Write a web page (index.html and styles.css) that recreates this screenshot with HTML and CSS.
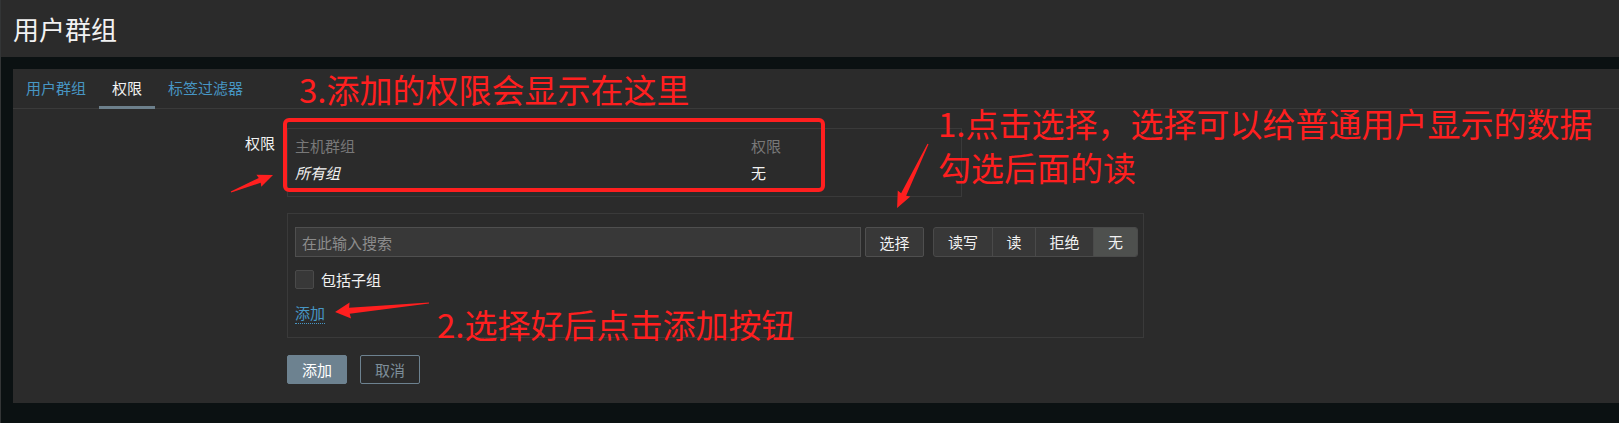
FILE: index.html
```html
<!DOCTYPE html>
<html lang="zh-CN">
<head>
<meta charset="utf-8">
<title>用户群组</title>
<link rel="stylesheet" href="styles.css">
</head>
<body>
<div class="page">
  <header class="topbar"><h1 class="title">用户群组</h1></header>
  <main class="main">
    <section class="panel">
      <ul class="tabs">
        <li class="tab"><a class="tab-link">用户群组</a></li>
        <li class="tab active"><a class="tab-link">权限</a></li>
        <li class="tab"><a class="tab-link">标签过滤器</a></li>
      </ul>
      <div class="form">
        <div class="form-row">
          <div class="form-label">权限</div>
          <div class="form-field">
            <div class="perm-table">
              <div class="perm-row perm-head"><span class="col-group">主机群组</span><span class="col-perm">权限</span></div>
              <div class="perm-row"><span class="col-group italic">所有组</span><span class="col-perm">无</span></div>
            </div>
            <div class="search-box">
              <div class="search-line">
                <input class="search-input" type="text" placeholder="在此输入搜索">
                <button class="btn-select" type="button">选择</button>
                <div class="segmented">
                  <span class="seg seg-rw">读写</span>
                  <span class="seg seg-r">读</span>
                  <span class="seg seg-deny">拒绝</span>
                  <span class="seg seg-none active">无</span>
                </div>
              </div>
              <div class="check-line">
                <span class="checkbox"></span>
                <span class="check-label">包括子组</span>
              </div>
              <div class="link-line"><a class="add-link">添加</a></div>
            </div>
          </div>
        </div>
        <div class="form-actions">
          <button class="btn btn-primary" type="button">添加</button>
          <button class="btn btn-outline" type="button">取消</button>
        </div>
      </div>
    </section>
  </main>

  <div class="annotations">
    <div class="note-box"></div>
    <div class="note note-3">3.添加的权限会显示在这里</div>
    <div class="note note-1">1.点击选择，选择可以给普通用户显示的数据<br>勾选后面的读</div>
    <div class="note note-2">2.选择好后点击添加按钮</div>
    <svg class="arrows" width="1619" height="423" viewBox="0 0 1619 423" xmlns="http://www.w3.org/2000/svg">
      <polygon fill="#ff1f1f" transform="translate(231 192) rotate(-22)" points="0,-0.6 31,-2.6 30,-6.5 45.3,0 30,6.5 31,2.6 0,0.6"/>
      <polygon fill="#ff1f1f" transform="translate(928 144) rotate(115.8)" points="0,-0.6 56,-2.8 55,-7 71,0 55,7 56,2.8 0,0.6"/>
      <polygon fill="#ff1f1f" transform="translate(429 303) rotate(174.5)" points="0,-0.6 80,-3 79,-8 94.4,0 79,8 80,3 0,0.6"/>
    </svg>
  </div>
</div>
</body>
</html>
```

FILE: styles.css
```css
* { box-sizing: border-box; }

html, body {
  margin: 0;
  padding: 0;
  background: #0b1112;
}

body {
  font-family: "Noto Sans CJK SC", "Noto Sans", sans-serif;
  font-size: 15px;
  line-height: 18px;
  color: #f2f2f2;
}

.page {
  position: relative;
  width: 1619px;
  height: 423px;
  overflow: hidden;
  border-left: 1px solid #333536;
}

.topbar {
  height: 57px;
  background: #2b2b2b;
  padding-left: 12px;
}

.title {
  margin: 0;
  font-size: 26px;
  font-weight: normal;
  line-height: 57px;
  color: #f2f2f2;
}

.main {
  padding: 12px 0 0 12px;
}

.panel {
  background: #2b2b2b;
  height: 334px;
}

.tabs {
  list-style: none;
  margin: 0;
  padding: 0;
  display: flex;
  height: 40px;
  border-bottom: 1px solid #3a3a3a;
}

.tab {
  height: 40px;
  padding: 0 13px;
  margin-bottom: -1px;
  line-height: 37px;
  border-bottom: 3px solid transparent;
}

.tab-link {
  color: #4796c4;
  font-size: 15px;
}

.tab.active { border-bottom-color: #6d808c; }
.tab.active .tab-link { color: #f2f2f2; }

.form {
  padding: 19px 0 19px 0;
}

.form-row {
  display: grid;
  grid-template-columns: 262px 1fr;
  column-gap: 12px;
}

.form-label {
  text-align: right;
  padding-top: 6px;
  color: #f2f2f2;
}

.form-field {
  display: flex;
  flex-direction: column;
  gap: 16px;
}

.perm-table {
  width: 675px;
  border: 1px solid #3a3a3a;
  padding: 3px 7px 10px 7px;
}

.perm-row {
  display: flex;
  height: 27px;
  line-height: 27px;
}

.col-group { width: 456px; }
.perm-head { color: #787878; }
.italic { font-style: italic; }

.search-box {
  width: 857px;
  border: 1px solid #3a3a3a;
  padding: 13px 5px 13px 7px;
}

.search-line {
  display: flex;
  height: 30px;
}

.search-input {
  flex: 1;
  height: 30px;
  margin: 0;
  background: #383838;
  border: 1px solid #4f4f4f;
  color: #f2f2f2;
  font-family: inherit;
  font-size: 15px;
  padding: 0 6px;
  outline: none;
}

.search-input::placeholder { color: #8c8c8c; }

.btn-select {
  width: 59px;
  height: 30px;
  margin-left: 4px;
  background: #383838;
  border: 1px solid #4f4f4f;
  border-radius: 2px;
  color: #f2f2f2;
  font-family: inherit;
  font-size: 15px;
  padding: 0;
}

.segmented {
  display: flex;
  width: 205px;
  height: 30px;
  margin-left: 9px;
  border: 1px solid #4a4a4a;
  border-radius: 3px;
  background: #383838;
  overflow: hidden;
}

.seg {
  display: flex;
  align-items: center;
  justify-content: center;
  color: #f2f2f2;
  border-left: 1px solid #4a4a4a;
}

.seg:first-child { border-left: none; }
.seg-rw { width: 58px; }
.seg-r { width: 43px; }
.seg-deny { width: 58px; }
.seg-none { flex: 1; }
.seg.active { background: #4e504e; }

.check-line {
  display: flex;
  align-items: center;
  margin-top: 13px;
  height: 19px;
}

.checkbox {
  width: 19px;
  height: 19px;
  background: #383838;
  border: 1px solid #4a4a4a;
  border-radius: 2px;
}

.check-label {
  margin-left: 7px;
}

.link-line {
  margin-top: 14px;
  height: 21px;
}

.add-link {
  display: inline-block;
  line-height: 20px;
  color: #4796c4;
  border-bottom: 1px dotted #4796c4;
}

.form-actions {
  display: flex;
  gap: 13px;
  margin: 17px 0 0 274px;
}

.btn {
  width: 60px;
  height: 29px;
  border-radius: 2px;
  font-family: inherit;
  font-size: 15px;
  padding: 0;
}

.btn-primary {
  background: #6d8290;
  border: 1px solid #6d8290;
  color: #ffffff;
}

.btn-outline {
  background: transparent;
  border: 1px solid #6d8290;
  color: #7d8e99;
}

/* Annotation overlay */
.annotations {
  position: absolute;
  left: -1px;
  top: 0;
  width: 1619px;
  height: 423px;
  pointer-events: none;
}

.note-box {
  position: absolute;
  left: 283px;
  top: 118px;
  width: 542px;
  height: 74px;
  border: 4px solid #ff1f1f;
  border-radius: 6px;
}

.note {
  position: absolute;
  color: #ff1f1f;
  font-size: 33px;
  line-height: 40px;
  white-space: nowrap;
}

.note-3 { left: 299px; top: 69px; }
.note-1 { left: 938px; top: 101px; line-height: 44px; }
.note-2 { left: 437px; top: 304px; }

.arrows {
  position: absolute;
  left: 0;
  top: 0;
}
```
